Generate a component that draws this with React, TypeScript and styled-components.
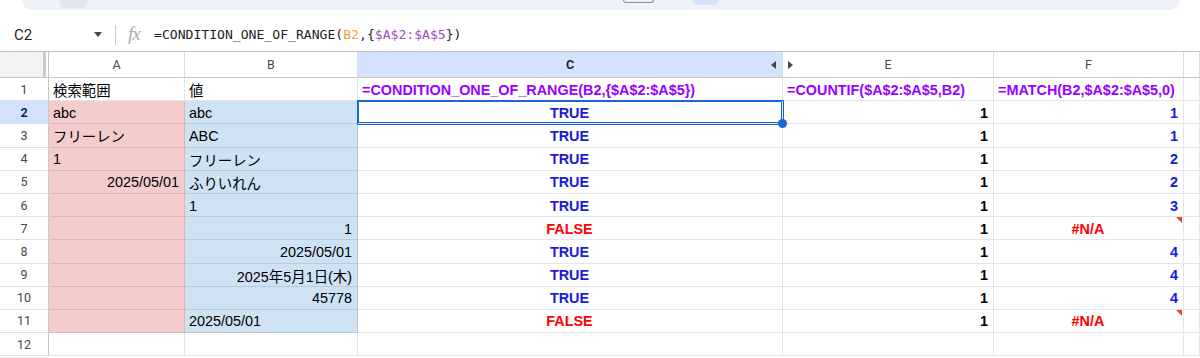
import React from "react";
import styled, { createGlobalStyle, css } from "styled-components";

const GlobalStyle = createGlobalStyle`
	body {
		margin: 0;
		background: #fff;
		font-family: "Liberation Sans", "Noto Sans CJK JP", Arial, sans-serif;
		overflow: hidden;
	}
`;

type Align = "left" | "center" | "right";
type Kind = "text" | "formula" | "true" | "false" | "count" | "match" | "na";

interface CellData {
	v: string;
	align?: Align;
	kind?: Kind;
}

const t = (v: string, align: Align = "left"): CellData => ({ v, align, kind: "text" });
const TRUE: CellData = { v: "TRUE", align: "center", kind: "true" };
const FALSE: CellData = { v: "FALSE", align: "center", kind: "false" };
const NA: CellData = { v: "#N/A", align: "center", kind: "na" };
const cnt = (v: string): CellData => ({ v, align: "right", kind: "count" });
const mt = (v: string): CellData => ({ v, align: "right", kind: "match" });

// A, B, C, E, F
const rows: (CellData | null)[][] = [
	[
		t("検索範囲"),
		t("値"),
		{ v: "=CONDITION_ONE_OF_RANGE(B2,{$A$2:$A$5})", kind: "formula" },
		{ v: "=COUNTIF($A$2:$A$5,B2)", kind: "formula" },
		{ v: "=MATCH(B2,$A$2:$A$5,0)", kind: "formula" },
	],
	[t("abc"), t("abc"), TRUE, cnt("1"), mt("1")],
	[t("フリーレン"), t("ABC"), TRUE, cnt("1"), mt("1")],
	[t("1"), t("フリーレン"), TRUE, cnt("1"), mt("2")],
	[t("2025/05/01", "right"), t("ふりいれん"), TRUE, cnt("1"), mt("2")],
	[null, t("1"), TRUE, cnt("1"), mt("3")],
	[null, t("1", "right"), FALSE, cnt("1"), NA],
	[null, t("2025/05/01", "right"), TRUE, cnt("1"), mt("4")],
	[null, t("2025年5月1日(木)", "right"), TRUE, cnt("1"), mt("4")],
	[null, t("45778", "right"), TRUE, cnt("1"), mt("4")],
	[null, t("2025/05/01"), FALSE, cnt("1"), NA],
	[null, null, null, null, null],
];

const kindColor: Record<Kind, string> = {
	text: "#000",
	formula: "#9900ff",
	true: "#1a1adb",
	false: "#ff0000",
	count: "#000",
	match: "#1a1adb",
	na: "#ff0000",
};

const App = () => {
	return (
		<Page>
			<GlobalStyle />
			<TopStrip>
				<ToolbarPill>
					<MenuChip />
					<FontSizeBox />
					<ActiveChip />
				</ToolbarPill>
			</TopStrip>

			<FormulaBar>
				<NameBox>
					<span>C2</span>
					<Caret />
				</NameBox>
				<BarDivider />
				<Fx>fx</Fx>
				<FormulaText>
					=CONDITION_ONE_OF_RANGE(<RefOrange>B2</RefOrange>,{"{"}
					<RefPurple>$A$2:$A$5</RefPurple>
					{"})"}
				</FormulaText>
			</FormulaBar>

			<Sheet>
				<Corner>
					<CornerFill />
				</Corner>
				<ColHeader>A</ColHeader>
				<ColHeader>B</ColHeader>
				<ColHeader $active $arrowRight>
					C
				</ColHeader>
				<ColHeader $arrowLeft>E</ColHeader>
				<ColHeader>F</ColHeader>
				<ColHeader />

				{rows.map((r, i) => {
					const n = i + 1;
					const tinted = n >= 2 && n <= 11;
					return (
						<React.Fragment key={n}>
							<RowHeader $active={n === 2}>{n}</RowHeader>
							{r.map((c, j) => (
								<Cell
									key={j}
									$bg={tinted && j === 0 ? "#f4cccc" : tinted && j === 1 ? "#cfe2f3" : undefined}
									$align={c?.align ?? "left"}
									$color={c ? kindColor[c.kind ?? "text"] : "#000"}
									$bold={!!c && c.kind !== "text"}
									$selected={n === 2 && j === 2}
									$error={c?.kind === "na"}
								>
									{c?.v}
								</Cell>
							))}
							<Cell $align='left' $color='#000' />
						</React.Fragment>
					);
				})}
			</Sheet>
		</Page>
	);
};

export default App;

const Page = styled.div`
	width: 1200px;
	height: 358px;
	overflow: hidden;
	display: flex;
	flex-direction: column;

	& > * {
		flex-shrink: 0;
	}
`;

const TopStrip = styled.div`
	height: 18px;
	padding: 0 20px 0 22px;
	box-sizing: border-box;
`;

const ToolbarPill = styled.div`
	height: 10px;
	background: #eef2f9;
	border-radius: 0 0 16px 16px;
	display: flex;
	align-items: flex-start;
`;

const MenuChip = styled.div`
	margin-left: 38px;
	width: 27px;
	height: 8px;
	background: #e3e8ef;
	border-radius: 0 0 5px 5px;
`;

const FontSizeBox = styled.div`
	margin-left: 536px;
	width: 29px;
	height: 2px;
	border: 1px solid #8a8d90;
	border-top: none;
	border-radius: 0 0 4px 4px;
`;

const ActiveChip = styled.div`
	margin-left: 38px;
	width: 26px;
	height: 5px;
	background: #d3e3fd;
	border-radius: 0 0 5px 5px;
`;

const FormulaBar = styled.div`
	height: 34px;
	display: flex;
	align-items: center;
	border-bottom: 1px solid #c4c7c5;
	box-sizing: border-box;
	padding-left: 14px;
`;

const NameBox = styled.div`
	width: 88px;
	display: flex;
	align-items: center;
	justify-content: space-between;
	font-family: Roboto, "Liberation Sans", sans-serif;
	font-size: 15px;
	color: #1f1f1f;
`;

const Caret = styled.span`
	width: 0;
	height: 0;
	border-left: 4px solid transparent;
	border-right: 4px solid transparent;
	border-top: 5px solid #444746;
`;

const BarDivider = styled.div`
	width: 1px;
	height: 20px;
	background: #c4c7c5;
	margin: 0 12px 0 13px;
`;

const Fx = styled.span`
	font-family: "Liberation Serif", serif;
	font-style: italic;
	font-size: 19px;
	color: #a8abad;
	width: 15px;
	margin-top: -2px;
	letter-spacing: -1px;
`;

const FormulaText = styled.div`
	margin-left: 11px;
	font-family: "DejaVu Sans Mono", "Liberation Mono", monospace;
	font-size: 13.1px;
	color: #1f1f1f;
	white-space: nowrap;
`;

const RefOrange = styled.span`
	color: #f3a33b;
`;

const RefPurple = styled.span`
	color: #9c4fbd;
`;

const Sheet = styled.div`
	display: grid;
	grid-template-columns: 49px 136px 173px 425px 211px 190px 1fr;
	grid-template-rows: 26px repeat(12, 23.2px);
`;

const Corner = styled.div`
	border-right: 1px solid #c4c7c5;
	border-bottom: 1px solid #c4c7c5;
	padding-right: 2px;
	display: flex;
`;

const CornerFill = styled.div`
	flex: 1;
	background: #f1f3f4;
	border-right: 3px solid #c7c9cb;
`;

const arrow = (dir: "left" | "right") => css`
	content: "";
	position: absolute;
	top: 50%;
	margin-top: -4px;
	width: 0;
	height: 0;
	border-top: 4px solid transparent;
	border-bottom: 4px solid transparent;
	${dir === "left" ? "border-right: 5px solid #444746; right: 6px;" : "border-left: 5px solid #444746; left: 5px;"}
`;

const ColHeader = styled.div<{ $active?: boolean; $arrowRight?: boolean; $arrowLeft?: boolean }>`
	position: relative;
	display: flex;
	align-items: center;
	justify-content: center;
	border-right: 1px solid #dadce0;
	border-bottom: 1px solid #c4c7c5;
	background: ${(p) => (p.$active ? "#d3e3fd" : "#fff")};
	font-family: Roboto, "Liberation Sans", sans-serif;
	font-size: 12.5px;
	font-weight: ${(p) => (p.$active ? 700 : 400)};
	color: ${(p) => (p.$active ? "#1f1f1f" : "#444746")};

	${(p) =>
		p.$arrowRight &&
		css`
			&::after {
				${arrow("left")}
			}
		`}
	${(p) =>
		p.$arrowLeft &&
		css`
			&::before {
				${arrow("right")}
			}
		`}
`;

const RowHeader = styled.div<{ $active?: boolean }>`
	display: flex;
	align-items: center;
	justify-content: center;
	border-right: 1px solid #c4c7c5;
	border-bottom: 1px solid #e1e1e1;
	background: ${(p) => (p.$active ? "#d3e3fd" : "#fff")};
	font-family: Roboto, "Liberation Sans", sans-serif;
	font-size: 12.5px;
	font-weight: ${(p) => (p.$active ? 700 : 400)};
	color: ${(p) => (p.$active ? "#0b2a66" : "#444746")};
`;

const Cell = styled.div<{
	$bg?: string;
	$align: Align;
	$color: string;
	$bold?: boolean;
	$selected?: boolean;
	$error?: boolean;
}>`
	position: relative;
	display: flex;
	align-items: center;
	justify-content: ${(p) => (p.$align === "left" ? "flex-start" : p.$align === "right" ? "flex-end" : "center")};
	padding: 1px 5px 0 4px;
	border-right: 1px solid rgba(0, 0, 0, 0.1);
	border-bottom: 1px solid rgba(0, 0, 0, 0.1);
	background: ${(p) => p.$bg ?? "#fff"};
	color: ${(p) => p.$color};
	font-size: 14.4px;
	font-weight: ${(p) => (p.$bold ? 700 : 400)};
	white-space: nowrap;
	min-width: 0;

	${(p) =>
		p.$selected &&
		css`
			z-index: 2;
			box-shadow: 0 0 0 1px #1967d2, inset 0 0 0 1px #1967d2;
			&::after {
				content: "";
				position: absolute;
				right: -5px;
				bottom: -5px;
				width: 9px;
				height: 9px;
				border-radius: 50%;
				background: #1967d2;
			}
		`}

	${(p) =>
		p.$error &&
		css`
			&::after {
				content: "";
				position: absolute;
				top: 0;
				right: 1px;
				width: 0;
				height: 0;
				border-top: 6px solid #e0463a;
				border-left: 6px solid transparent;
			}
		`}
`;
